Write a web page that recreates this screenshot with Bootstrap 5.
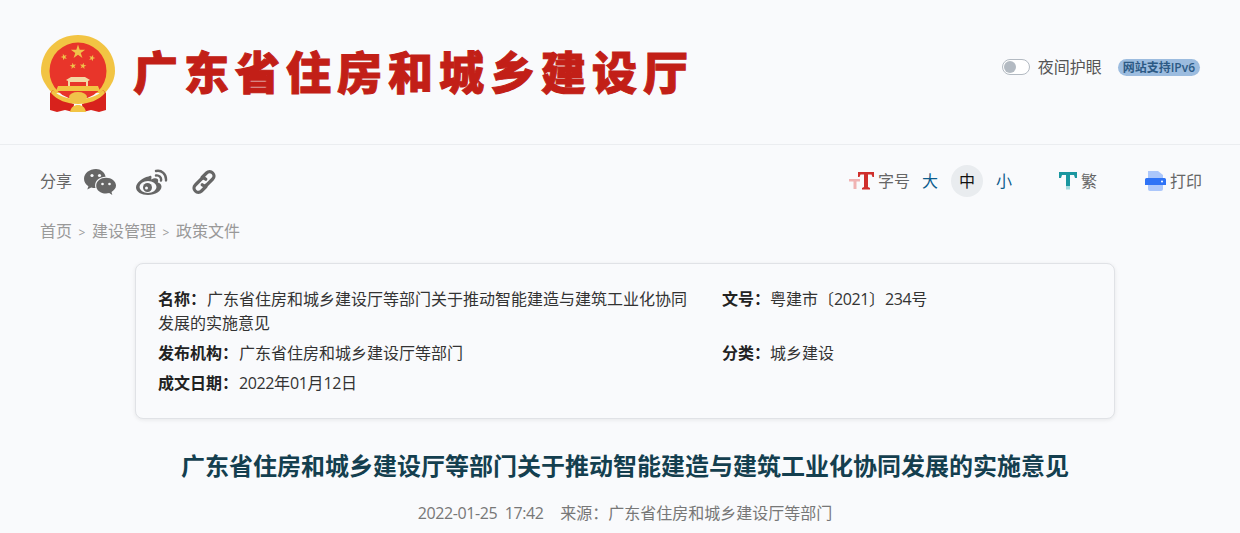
<!DOCTYPE html>
<html lang="zh-CN">
<head>
  <meta charset="UTF-8" />
  <title>广东省住房和城乡建设厅</title>
  <meta name="viewport" content="width=device-width, initial-scale=1" />
  <link href="https://cdn.jsdelivr.net/npm/bootstrap@5.3.0/dist/css/bootstrap.min.css" rel="stylesheet" />
  <style>
    html, body { height: 533px; overflow: hidden; }
    body { background: #f9fafc; font-family: "Open Sans", "Noto Sans CJK SC", sans-serif; color: #333; font-size: 16px; }
    .site-head { height: 145px; padding: 0 40px; border-bottom: 1px solid #ebedf0; }
    .emblem { margin-top: 4px; }
    .logo-text { font-family: "Noto Sans CJK SC", sans-serif; font-weight: 900; font-size: 45px; line-height: 1; letter-spacing: 6px; color: #c21f17; -webkit-text-stroke: 1px #c21f17; margin-left: 15px; margin-top: -3px; white-space: nowrap; }
    .night-box { margin-top: -10px; }
    .night-switch { width: 28px; height: 16px; border: 1px solid #b3bac2; border-radius: 8px; padding: 1px; background: #fff; }
    .night-knob { width: 12px; height: 12px; border-radius: 50%; background: #b3bac2; }
    .night-label { color: #555; margin-left: 8px; }
    .ipv6-tag { margin-left: 16px; background: #9cbcdf; color: #2c5a85; font-size: 12px; font-weight: 600; line-height: 17px; padding: 0 5px; border-radius: 9px; }
    .tool-row { padding: 20px 38px 0 40px; height: 76px; color: #666; }
    .tool-side { height: 32px; }
    .share-label { color: #666; margin-right: 12px; }
    .share-icons { gap: 20px; margin-top: 2px; }
    .chain-icon { margin-left: 3px; }
    .size-btn { width: 32px; height: 32px; border-radius: 50%; display: flex; align-items: center; justify-content: center; color: #0d5c8c; }
    .size-btn.is-on { background: #e9ecef; color: #111; margin: 0 5px; }
    .tool-text { color: #666; margin-left: 4px; }
    .tool-text.is-tight { margin-left: 3px; }
    .tool-gap-t { margin-left: 39px; }
    .tool-gap-p { margin-left: 48px; }
    .crumbs { padding: 0 40px; color: #999; line-height: 22px; margin-top: -1px; }
    .crumbs i { display: inline-block; width: 20px; text-align: center; font-style: normal; font-size: 12px; }
    .info-box { margin: 19px 125px 0 135px; height: 156px; padding: 23px 22px 0; border: 1px solid #e0e2e6; border-radius: 8px; box-shadow: 0 1px 4px rgba(0,0,0,.08); background: #f9fafc; line-height: 24px; color: #333; }
    .info-left { width: 564px; padding-right: 30px; }
    .info-row { margin-bottom: 6px; }
    .info-box b { color: #222; font-weight: 700; }
    .info-left b { margin-right: 1px; }
    .num-text { letter-spacing: -.4px; }
    .doc-title { margin: 31px 0 0 10px; text-align: center; font-size: 24px; font-weight: 700; line-height: 32px; color: #143f4f; }
    .doc-meta { margin: 21px 0 0 10px; text-align: center; color: #777; line-height: 20px; }
  </style>
</head>
<body>
  <header class="site-head d-flex align-items-center justify-content-between">
    <div class="d-flex align-items-center">
      <!-- national emblem, drawn by hand -->
      <svg class="emblem" width="78" height="78" viewBox="0 0 78 78">
        <defs><polygon id="emblemStar" points="0,-1 .225,-.309 .951,-.309 .363,.118 .588,.809 0,.382 -.588,.809 -.363,.118 -.951,-.309 -.225,-.309" fill="#f0c24a"/></defs>
        <path d="M12 58C5 50 1 43 1 36 1 16 17 0 38 0s37 16 37 36c0 7-3 14-10 22z" fill="#f2c443"/>
        <circle cx="38" cy="36" r="28.500" fill="#e8352a"/>
        <use href="#emblemStar" transform="translate(38 17) scale(7.500)"/>
        <use href="#emblemStar" transform="translate(24 22) rotate(-20) scale(3.400)"/>
        <use href="#emblemStar" transform="translate(52 23) rotate(20) scale(3.400)"/>
        <use href="#emblemStar" transform="translate(33 31) rotate(-10) scale(3.400)"/>
        <use href="#emblemStar" transform="translate(43 31) rotate(10) scale(3.400)"/>
        <path d="M26 45l5-3h14l5 3-2 1v5H28v-5z" fill="#f3d9a4"/>
        <path d="M30 47h16v4H30z" fill="#e8352a"/>
        <path d="M18 51h40l2 5H16z" fill="#f2c443"/>
        <path d="M10 58l3-3c5 7 12 11 21 14l-1 8-8-2-8 2-7-2z" fill="#d8221c"/>
        <path d="M66 58l-3-3c-5 7-12 11-21 14l1 8 8-2 8 2 7-2z" fill="#d8221c"/>
        <path d="M13 55c5 6 14 9 25 9s20-3 25-9l2 3c-6 7-16 11-27 11s-21-4-27-11z" fill="#f2c443"/>
        <ellipse cx="38" cy="62" rx="9" ry="5" fill="#f0c24a"/>
        <path d="M30 77c1-5 4-7 8-7s7 2 8 7z" fill="#f2c443"/>
      </svg>
      <div class="logo-text">广东省住房和城乡建设厅</div>
    </div>
    <div class="d-flex align-items-center night-box">
      <div class="night-switch"><div class="night-knob"></div></div>
      <span class="night-label">夜间护眼</span>
      <span class="ipv6-tag">网站支持IPv6</span>
    </div>
  </header>

  <div class="tool-row d-flex justify-content-between">
    <div class="d-flex align-items-center tool-side">
      <span class="share-label">分享</span>
      <div class="d-flex share-icons align-items-center">
        <!-- wechat -->
        <svg width="32" height="26" viewBox="0 0 32 26">
          <path d="M12 0C5.400 0 0 4.300 0 9.700c0 3 1.700 5.700 4.400 7.500L3.300 20.500l3.900-2.100c1.300.4 2.800.6 4.300.6-.3-.9-.4-1.800-.4-2.600 0-5 4.700-8.800 10.500-8.700C20.600 3.200 16.700 0 12 0z" fill="#666"/>
          <path d="M22 8.700c-5.400 0-9.800 3.500-9.800 8s4.400 7.800 9.800 7.800c1.100 0 2.200-.2 3.200-.5l3.100 1.900-.8-3c2.700-1.400 4.500-3.700 4.500-6.300 0-4.400-4.500-7.900-10-7.900z" fill="#666"/>
          <g fill="#f9fafc"><circle cx="8" cy="6.500" r="1.600"/><circle cx="15.500" cy="6.500" r="1.600"/><circle cx="18.500" cy="15" r="1.300"/><circle cx="25.500" cy="15" r="1.300"/></g>
        </svg>
        <!-- weibo -->
        <svg width="32" height="26" viewBox="0 0 32 26">
          <path d="M12.500 7.500C6.500 8.500 0 14 0 18.500 0 23 5.500 26 12 26c7.500 0 13.500-4 13.500-8.500 0-2.500-2-3.500-3.700-4 .5-1.500.6-2.700-.2-3.500-1.300-1.200-4-.7-6.500.5.600-1.800.6-3.200-.3-3.700-.5-.2-1.200 0-2.300.7z" fill="#666"/>
          <ellipse cx="12" cy="18" rx="8.500" ry="6" fill="#f9fafc"/>
          <circle cx="11.500" cy="18.500" r="4.500" fill="#666"/>
          <circle cx="10.500" cy="19" r="1.500" fill="#f9fafc"/>
          <path d="M20 2c5.500-1.300 10.500 3.200 10 9.500M20 6.500c3-.5 5.700 1.800 5 5" fill="none" stroke="#666" stroke-width="2.400" stroke-linecap="round"/>
        </svg>
        <!-- link -->
        <svg class="chain-icon" width="26" height="26" viewBox="0 0 26 26">
          <g fill="none" stroke="#666" stroke-width="3.200" stroke-linecap="round">
            <path d="M11 8.500 15.500 4c1.800-1.800 4.500-1.800 6.200 0s1.800 4.300 0 6l-5.500 5.500c-1.500 1.500-3.600 1.500-5 .3"/>
            <path d="M15 17.500 10.500 22c-1.800 1.800-4.500 1.800-6.200 0s-1.800-4.300 0-6l5.500-5.500c1.500-1.500 3.600-1.500 5-.3"/>
          </g>
        </svg>
      </div>
    </div>
    <div class="d-flex align-items-center tool-side">
      <svg width="26" height="18" viewBox="0 0 26 18">
        <path d="M0 7h11v2.500H7.500V17h-3V9.500H0z" fill="#f0b3b3"/>
        <path d="M9 0h16v5h-1.500l-1-2.500H19V15l2 1v1.500h-8V16l2-1V2.500h-3.500l-1 2.500H9z" fill="#cf2f2c"/>
      </svg>
      <span class="tool-text is-tight">字号</span>
      <span class="size-btn ms-1">大</span>
      <span class="size-btn is-on">中</span>
      <span class="size-btn">小</span>
      <svg class="tool-gap-t" width="18" height="18" viewBox="0 0 18 18">
        <path d="M0 0h18v6h-2l-1-3h-4v11H7V3H3L2 6H0z" fill="#1b97a0"/>
        <path d="M7 14h4v3.500H7z" fill="#a5dbdf"/>
      </svg>
      <span class="tool-text">繁</span>
      <svg class="tool-gap-p" width="21" height="20" viewBox="0 0 21 20">
        <path d="M3 0h10l5 4v5H3zM3 14h15v4a2 2 0 0 1-2 2H5a2 2 0 0 1-2-2z" fill="#acc7fb"/>
        <path d="M1.500 7h18A1.500 1.500 0 0 1 21 8.500V14H0V8.500A1.500 1.500 0 0 1 1.500 7z" fill="#2f73f6"/>
        <circle cx="17" cy="10.500" r="1" fill="#fff"/>
      </svg>
      <span class="tool-text">打印</span>
    </div>
  </div>

  <nav class="crumbs"><span>首页</span><i>&gt;</i><span>建设管理</span><i>&gt;</i><span>政策文件</span></nav>

  <section class="info-box">
    <div class="d-flex info-row">
      <div class="info-left"><b>名称&#xFF1A;</b>广东省住房和城乡建设厅等部门关于推动智能建造与建筑工业化协同发展的实施意见</div>
      <div><b>文号&#xFF1A;</b>粤建市〔<span class="num-text">2021</span>〕<span class="num-text">234</span>号</div>
    </div>
    <div class="d-flex info-row">
      <div class="info-left"><b>发布机构&#xFF1A;</b>广东省住房和城乡建设厅等部门</div>
      <div><b>分类&#xFF1A;</b>城乡建设</div>
    </div>
    <div class="d-flex info-row">
      <div class="info-left"><b>成文日期&#xFF1A;</b><span class="num-text">2022</span>年<span class="num-text">01</span>月<span class="num-text">12</span>日</div>
    </div>
  </section>

  <h1 class="doc-title">广东省住房和城乡建设厅等部门关于推动智能建造与建筑工业化协同发展的实施意见</h1>
  <div class="doc-meta"><span class="num-text">2022-01-25&nbsp;&nbsp;17:42</span>&nbsp;&nbsp;&nbsp;&nbsp;来源&#xFF1A;广东省住房和城乡建设厅等部门</div>

  <script src="https://cdn.jsdelivr.net/npm/bootstrap@5.3.0/dist/js/bootstrap.bundle.min.js"></script>
</body>
</html>
